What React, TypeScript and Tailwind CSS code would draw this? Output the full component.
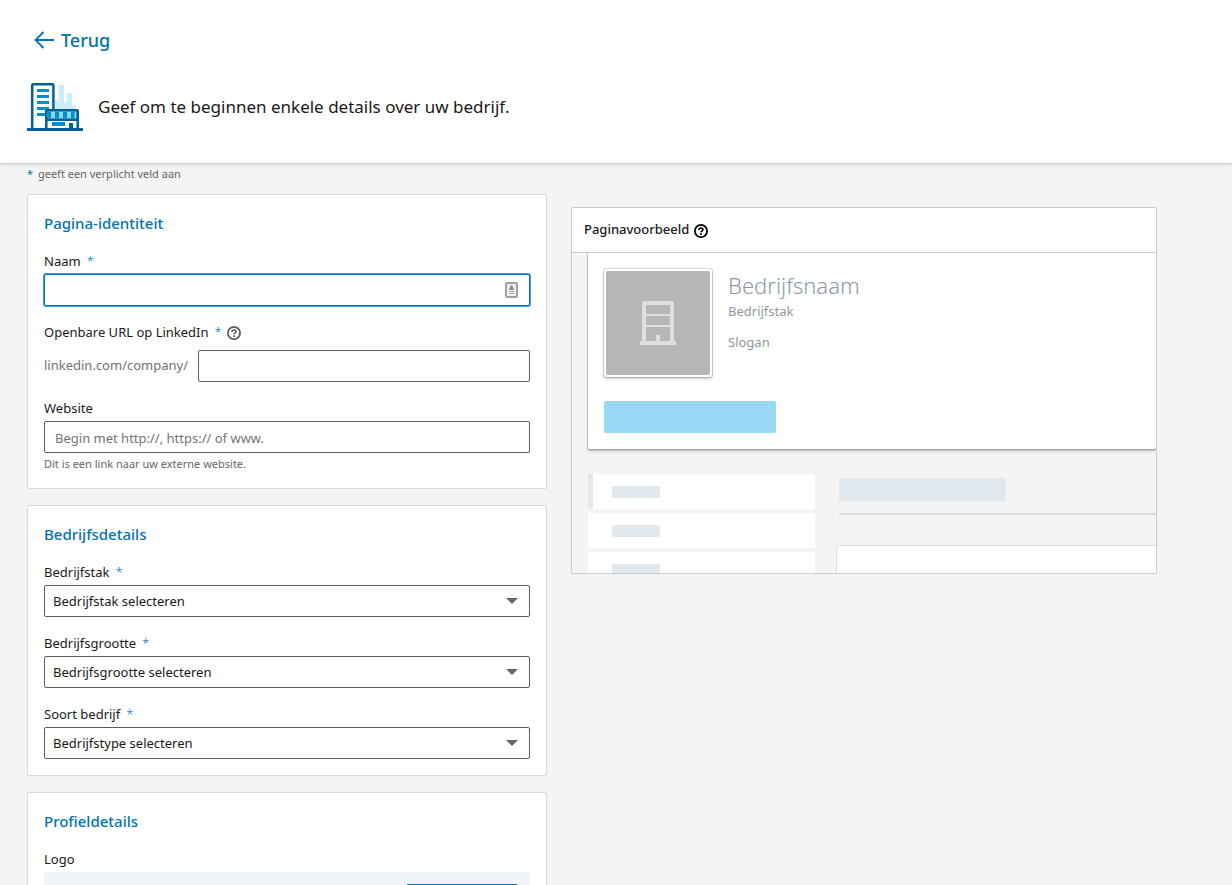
import { useId, type ReactNode } from "react";

function CompanyIllustration() {
  return (
    <svg width="56" height="48" viewBox="0 0 56 48" fill="none" aria-hidden="true">
      <path d="M28 17l3.500 1V2H37v17.500l2.500.8V10H45v12l3.500 1.500V27H28z" fill="#caeeff" />
      <path d="M5.200 46V2.500c0-.7.5-1.200 1.200-1.200h18.800c.7 0 1.200.5 1.200 1.200V27" stroke="#006097" strokeWidth="2.500" />
      <path d="M10 7.500h12M10 13.500h12M10 19.500h12M10 25.500h12M10 31.500h8" stroke="#0091ca" strokeWidth="3" />
      <path d="M19.300 28h31.400v19H19.300z" fill="#fff" stroke="#006097" strokeWidth="2.500" />
      <rect x="19.300" y="27.300" width="31.400" height="9.400" rx="1.600" fill="#8fd6f3" stroke="#006097" strokeWidth="2.600" />
      <path d="M20.600 28.600h3.400v7h-3.400zM28 28.600h4v7h-4zM36 28.600h4v7h-4zM44 28.600h3.500v7H44z" fill="#0091ca" />
      <path d="M25 39h13v4H25z" fill="#0091ca" />
      <path d="M42 46v-6h4v6z" fill="#006097" />
      <path d="M0 46.500h56" stroke="#006097" strokeWidth="3" />
    </svg>
  );
}

function HelpIcon() {
  return (
    <svg width="14" height="14" viewBox="0 0 14 14" fill="none" stroke="currentColor" strokeWidth="1.8">
      <circle cx="7" cy="7" r="6.1" />
      <path d="M5 5.9c0-1.2.8-1.9 2-1.9s2 .7 2 1.7c0 1.4-2 1.2-2 2.6" strokeWidth="1.6" />
      <path d="M7 9.2v1.7" />
    </svg>
  );
}

function Required() {
  return <span className="ml-1.5 font-light text-[#0073b1]">*</span>;
}

function Card({ title, children }: { title: string; children: ReactNode }) {
  return (
    <section className="flex flex-col gap-[15px] rounded-xs border border-[#d9d9d9] bg-white p-4">
      <h2 className="text-[15px] leading-6 font-medium text-[#0073b1]">{title}</h2>
      {children}
    </section>
  );
}

function SelectField({ label, placeholder }: { label: string; placeholder: string }) {
  const id = useId();
  return (
    <div>
      <label htmlFor={id} className="mb-0.5 block text-[13px] leading-[22px]">
        {label}
        <Required />
      </label>
      <div className="relative">
        <select
          id={id}
          className="block h-8 w-full appearance-none rounded-xs border border-[#5e5e5e] bg-white px-2 pt-0.5 text-[13px] text-[#191919]"
        >
          <option>{placeholder}</option>
        </select>
        <svg width="12" height="6" viewBox="0 0 12 6" className="pointer-events-none absolute top-[13px] right-3" fill="#666">
          <path d="M0 0h12L6 6z" />
        </svg>
      </div>
    </div>
  );
}

function IdentityCard() {
  return (
    <Card title="Pagina-identiteit">
      <div>
        <label htmlFor="name" className="mb-0.5 block text-[13px] leading-[22px]">
          Naam
          <Required />
        </label>
        <div className="relative">
          <input
            id="name"
            className="block h-8 w-full rounded-xs border border-[#0073b1] bg-white px-2 text-[13px] ring-1 ring-[#4a9fcd] outline-none"
          />
          <svg width="13" height="16" viewBox="0 0 13 16" className="pointer-events-none absolute top-2 right-3" fill="none">
            <rect x="1" y="1" width="11" height="14" rx="1" fill="#f0f0f0" stroke="#a0a0a0" strokeWidth="2" />
            <path d="M6.500 3l1.200 1.600L9 8H4l1.300-3.400z" fill="#888" />
            <path d="M4 9.500h5M4 11.500h5" stroke="#aaa" />
          </svg>
        </div>
      </div>

      <div>
        <div className="flex h-6 items-center gap-[5px] text-[13px]">
          <label htmlFor="public-url">
            Openbare URL op LinkedIn
            <Required />
          </label>
          <button type="button" aria-label="Help" className="text-[#5e5e5e]">
            <HelpIcon />
          </button>
        </div>
        <div className="mt-[5px] flex items-center gap-2.5">
          <span className="text-[13px] text-[#737373]">linkedin.com/company/</span>
          <input id="public-url" className="h-8 min-w-0 flex-1 rounded-xs border border-[#5e5e5e] bg-white px-2 text-[13px]" />
        </div>
      </div>

      <div>
        <label htmlFor="website" className="mb-0.5 block text-[13px] leading-[22px]">
          Website
        </label>
        <input
          id="website"
          placeholder="Begin met http://, https:// of www."
          className="block h-8 w-full rounded-xs border border-[#5e5e5e] bg-white px-2.5 pt-0.5 text-[13px] placeholder:text-[#757575]"
        />
        <p className="mt-[3px] text-[11px] leading-4 text-[#666]">Dit is een link naar uw externe website.</p>
      </div>
    </Card>
  );
}

function NavPlaceholder({ active = false }: { active?: boolean }) {
  return (
    <div className={`flex h-[35px] shrink-0 items-center bg-white ${active ? "border-l-[5px] border-[#e1e8ee] pl-[19px]" : "pl-6"}`}>
      <div className="h-3 w-12 rounded-xs bg-[#e1e8ee]" />
    </div>
  );
}

function PagePreview() {
  return (
    <aside className="mt-[13px] self-start overflow-hidden rounded-xs border border-[#cdcdcd]">
      <div className="flex h-[45px] items-center gap-[5px] border-b border-[#cdcdcd] bg-white pl-3">
        <h2 className="text-[13px] font-medium text-[#191919]">Paginavoorbeeld</h2>
        <button type="button" aria-label="Help" className="mt-0.5 text-black">
          <HelpIcon />
        </button>
      </div>

      <div className="h-80 overflow-hidden pl-4">
        <div className="rounded-b-xs bg-white p-4 shadow-[0_0_0_1px_rgba(0,0,0,0.15),0_2px_3px_rgba(0,0,0,0.25)]">
          <div className="flex gap-4">
            <div className="size-[108px] rounded-xs bg-white p-0.5 shadow-[0_0_0_1px_rgba(0,0,0,0.15),0_2px_3px_rgba(0,0,0,0.2)]">
              <div className="flex h-full items-center justify-center rounded-xs bg-[#b6b6b6]">
                <svg width="36" height="44" viewBox="0 0 36 44" fill="#dedede">
                  <path
                    fillRule="evenodd"
                    d="M4 0h28a2 2 0 0 1 2 2v38h2v4H0v-4h2V2a2 2 0 0 1 2-2zM6 4v9h24V4zM6 15v9h24v-9zM6 26v14h10v-6h4v6h10V26z"
                  />
                </svg>
              </div>
            </div>
            <div className="text-[13px] leading-5 text-[#8d99a5]">
              <h3 className="text-[22px] leading-8 font-light">Bedrijfsnaam</h3>
              <p>Bedrijfstak</p>
              <p className="mt-[11px]">Slogan</p>
            </div>
          </div>
          <div className="mt-6 h-8 w-[172px] rounded-xs bg-[#98d8f4]" />
        </div>

        <div className="mt-[25px] flex gap-[21px]">
          <div className="flex w-[227px] shrink-0 flex-col gap-1">
            <NavPlaceholder active />
            <NavPlaceholder />
            <NavPlaceholder />
          </div>
          <div className="flex-1 pt-1">
            <div className="ml-[3px] h-[23px] w-[167px] rounded-xs bg-[#e1e8ee]" />
            <div className="mt-3 ml-[3px] h-0.5 bg-[#dcdcdc]" />
            <div className="mt-[30px] h-16 rounded-tl-sm border-t border-l border-[#dcdcdc] bg-white" />
          </div>
        </div>
      </div>
    </aside>
  );
}

export default function App() {
  return (
    <div className="flex h-screen flex-col overflow-hidden bg-[#f4f4f4] font-['Noto_Sans','Open_Sans',sans-serif] text-[#191919]">
      <header className="z-10 shrink-0 bg-white px-[27px] pt-7 pb-8 shadow-[0_0_4px_rgba(0,0,0,0.35)]">
        <a href="#" className="ml-[7px] inline-flex items-center gap-[7px] text-lg leading-6 font-medium text-[#0073b1]">
          <svg width="20" height="18" viewBox="0 0 20 18" fill="none" stroke="currentColor" strokeWidth="1.8">
            <path d="M9.500 1L1.500 9l8 8M1.500 9H20" />
          </svg>
          Terug
        </a>
        <div className="mt-7 flex items-center gap-[15px]">
          <CompanyIllustration />
          <h1 className="text-[17px] leading-6">Geef om te beginnen enkele details over uw bedrijf.</h1>
        </div>
      </header>

      <main className="min-h-0 flex-1 overflow-hidden px-[27px] pt-[3px]">
        <p className="mb-3 text-[11px] leading-4 text-[#666]">
          <span className="mr-0.5 text-[#0073b1]">*</span> geeft een verplicht veld aan
        </p>
        <div className="grid grid-cols-[520px_minmax(0,586px)] gap-6">
          <form className="flex flex-col gap-4">
            <IdentityCard />
            <Card title="Bedrijfsdetails">
              <SelectField label="Bedrijfstak" placeholder="Bedrijfstak selecteren" />
              <SelectField label="Bedrijfsgrootte" placeholder="Bedrijfsgrootte selecteren" />
              <SelectField label="Soort bedrijf" placeholder="Bedrijfstype selecteren" />
            </Card>
            <Card title="Profieldetails">
              <div>
                <span className="mb-0.5 block text-[13px] leading-[22px]">Logo</span>
                <div className="flex justify-end bg-[#f1f5f8] p-3">
                  <button type="button" aria-label="Logo" className="h-8 w-28 rounded-xs border border-[#0073b1]" />
                </div>
              </div>
            </Card>
          </form>
          <PagePreview />
        </div>
      </main>
    </div>
  );
}
